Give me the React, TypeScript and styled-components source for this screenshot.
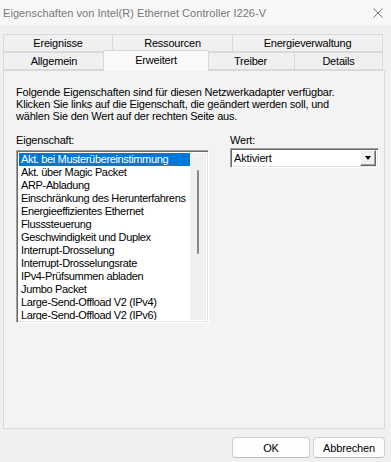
import styled, { createGlobalStyle } from 'styled-components';

const GlobalStyle = createGlobalStyle`
    html, body {
        margin: 0;
        padding: 0;
        background: #f0f0f0;
    }
    body {
        font-family: "Liberation Sans", Arial, sans-serif;
        font-size: 11px;
        color: #000;
    }
`

const Window = styled.div`
    width: 391px;
    height: 462px;
    background: #f0f0f0;
    display: flex;
    flex-direction: column;
    overflow: hidden;
`

const TitleBar = styled.div`
    height: 25px;
    display: flex;
    align-items: center;
    justify-content: space-between;
    padding: 0 8px 0 3px;
    background: #f7f7f7;
    color: #777;
    font-size: 11px;
    letter-spacing: 0.05px;
`

const CloseIcon = styled.svg`
    width: 10px;
    height: 10px;
`

const Body = styled.div`
    flex: 1;
    display: flex;
    flex-direction: column;
    padding: 9px 6px 0 3px;
`

const TabRow = styled.div`
    display: flex;
    height: 18px;
    width: 380px;
`

const Tab = styled.div<{ $w: number; $active?: boolean }>`
    box-sizing: border-box;
    width: ${p => p.$w}px;
    height: 18px;
    display: flex;
    align-items: center;
    justify-content: center;
    background: #f0f0f0;
    border: 1px solid #d9d9d9;
    border-left-width: 0;
    font-size: 11px;
    letter-spacing: -0.2px;
    line-height: 1;
    color: #000;

    &:first-child {
        border-left-width: 1px;
    }

    ${p => p.$active && `
        position: relative;
        z-index: 2;
        width: ${p.$w + 4}px;
        height: 21px;
        margin: -2px -2px -1px;
        background: #f9f9f9;
        border: 1px solid #d9d9d9;
        border-bottom: none;
        align-items: flex-start;
        padding-top: 4px;
    `}
`

const Panel = styled.div`
    box-sizing: border-box;
    width: 382px;
    height: 359px;
    border: 1px solid #d9d9d9;
    background: #f3f3f3;
    padding: 15px 6px 0 12px;
    display: flex;
    flex-direction: column;
`

const Description = styled.p`
    margin: 0;
    line-height: 12px;
    font-size: 11px;
    letter-spacing: -0.2px;
`

const Columns = styled.div`
    display: flex;
    gap: 21px;
    margin-top: 12px;
`

const Column = styled.div<{ $w: number }>`
    width: ${p => p.$w}px;
    flex-shrink: 0;
    display: flex;
    flex-direction: column;
`

const Label = styled.div<{ $gap: number }>`
    line-height: 12px;
    letter-spacing: -0.2px;
    margin-bottom: ${p => p.$gap}px;
`

const ListBox = styled.div`
    box-sizing: border-box;
    height: 173px;
    background: #fff;
    border: 1px solid;
    border-color: #a0a0a0 #fff #fff #a0a0a0;
    box-shadow: inset 1px 1px #696969, inset -1px -1px #e3e3e3;
    padding: 2px;
    display: flex;
`

const Items = styled.div`
    flex: 1;
    display: flex;
    flex-direction: column;
    overflow: hidden;
`

const Item = styled.div<{ $selected?: boolean }>`
    height: 13px;
    line-height: 13px;
    padding-left: 2px;
    white-space: nowrap;
    font-size: 11px;
    letter-spacing: -0.35px;
    background: ${p => (p.$selected ? '#0078d7' : 'transparent')};
    color: ${p => (p.$selected ? '#fff' : '#000')};
`

const ScrollTrack = styled.div`
    width: 16px;
    flex-shrink: 0;
    background: #f0f0f0;
    display: flex;
    justify-content: center;
    padding-top: 17px;
`

const ScrollThumb = styled.div`
    width: 2px;
    height: 84px;
    background: #8a8a8a;
    border-radius: 1px;
`

const Combo = styled.div`
    box-sizing: border-box;
    height: 20px;
    background: #fff;
    border: 1px solid;
    border-color: #a0a0a0 #fff #fff #a0a0a0;
    box-shadow: inset 1px 1px #696969, inset -1px -1px #e3e3e3;
    padding: 2px;
    display: flex;
    align-items: center;
`

const ComboText = styled.div`
    flex: 1;
    padding-left: 1px;
    font-size: 11px;
    letter-spacing: -0.15px;
`

const ComboButton = styled.div`
    box-sizing: border-box;
    width: 16px;
    height: 16px;
    background: #f0f0f0;
    border: 1px solid;
    border-color: #fff #696969 #696969 #fff;
    box-shadow: inset -1px -1px #a0a0a0;
    display: flex;
    align-items: center;
    justify-content: center;
`

const Arrow = styled.div`
    width: 0;
    height: 0;
    border-left: 3.5px solid transparent;
    border-right: 3.5px solid transparent;
    border-top: 4px solid #000;
`

const Footer = styled.div`
    display: flex;
    justify-content: flex-end;
    gap: 3px;
    margin-top: 8px;
    width: 382px;
`

const Button = styled.button<{ $w: number }>`
    box-sizing: border-box;
    width: ${p => p.$w}px;
    height: 21px;
    background: #fdfdfd;
    border: 1px solid #d0d0d0;
    border-bottom-color: #bcbcbc;
    border-radius: 4px;
    font-family: "Liberation Sans", Arial, sans-serif;
    font-size: 11px;
    letter-spacing: -0.15px;
    color: #000;
    padding: 0;
`

const properties = [
    'Akt. bei Musterübereinstimmung',
    'Akt. über Magic Packet',
    'ARP-Abladung',
    'Einschränkung des Herunterfahrens',
    'Energieeffizientes Ethernet',
    'Flusssteuerung',
    'Geschwindigkeit und Duplex',
    'Interrupt-Drosselung',
    'Interrupt-Drosselungsrate',
    'IPv4-Prüfsummen abladen',
    'Jumbo Packet',
    'Large-Send-Offload V2 (IPv4)',
    'Large-Send-Offload V2 (IPv6)',
]

export default function App() {
    return (
        <Window>
            <GlobalStyle />
            <TitleBar>
                <span>Eigenschaften von Intel(R) Ethernet Controller I226-V</span>
                <CloseIcon viewBox="0 0 10 10">
                    <path d="M0.5 0.5 L9.5 9.5 M9.5 0.5 L0.5 9.5" stroke="#777" strokeWidth="1" fill="none" />
                </CloseIcon>
            </TitleBar>
            <Body>
                <TabRow>
                    <Tab $w={110}>Ereignisse</Tab>
                    <Tab $w={120}>Ressourcen</Tab>
                    <Tab $w={150}>Energieverwaltung</Tab>
                </TabRow>
                <TabRow>
                    <Tab $w={102}>Allgemein</Tab>
                    <Tab $w={102} $active>Erweitert</Tab>
                    <Tab $w={88}>Treiber</Tab>
                    <Tab $w={88}>Details</Tab>
                </TabRow>
                <Panel>
                    <Description>
                        Folgende Eigenschaften sind für diesen Netzwerkadapter verfügbar.<br />
                        Klicken Sie links auf die Eigenschaft, die geändert werden soll, und<br />
                        wählen Sie den Wert auf der rechten Seite aus.
                    </Description>
                    <Columns>
                        <Column $w={193}>
                            <Label $gap={4}>Eigenschaft:</Label>
                            <ListBox>
                                <Items>
                                    {properties.map((p, i) => (
                                        <Item key={p} $selected={i === 0}>{p}</Item>
                                    ))}
                                </Items>
                                <ScrollTrack>
                                    <ScrollThumb />
                                </ScrollTrack>
                            </ListBox>
                        </Column>
                        <Column $w={149}>
                            <Label $gap={2}>Wert:</Label>
                            <Combo>
                                <ComboText>Aktiviert</ComboText>
                                <ComboButton>
                                    <Arrow />
                                </ComboButton>
                            </Combo>
                        </Column>
                    </Columns>
                </Panel>
                <Footer>
                    <Button $w={78}>OK</Button>
                    <Button $w={72}>Abbrechen</Button>
                </Footer>
            </Body>
        </Window>
    );
}
